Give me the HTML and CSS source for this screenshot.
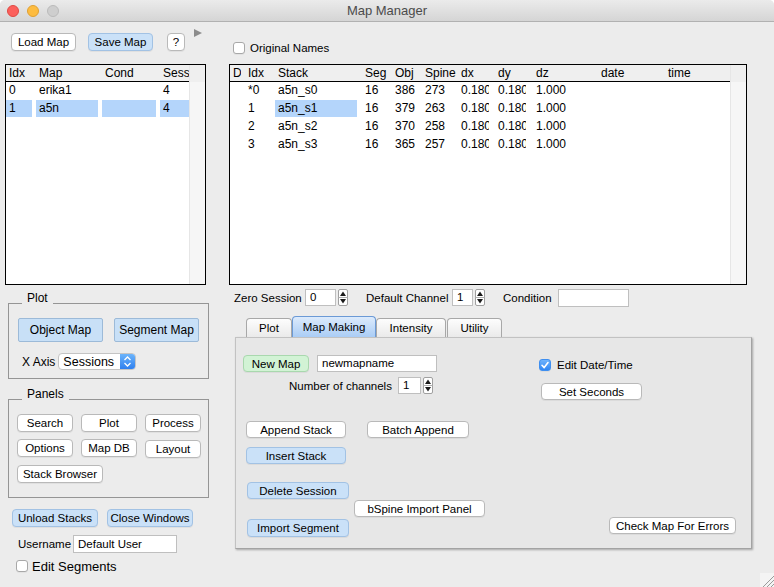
FILE: index.html
```html
<!DOCTYPE html>
<html>
<head>
<meta charset="utf-8">
<title>Map Manager</title>
<link rel="stylesheet" href="styles.css">
</head>
<body>
<div class="window">
  <header class="titlebar">
    <div class="lights"><span class="light red"></span><span class="light yellow"></span><span class="light gray"></span></div>
    <div class="title">Map Manager</div>
    <div></div>
  </header>
  <main class="body">
    <section class="left">
      <div class="toolbar">
        <div class="btn load-btn">Load Map</div>
        <div class="btn blue save-btn">Save Map</div>
        <div class="btn help-btn">?</div>
        <div class="tri"></div>
      </div>

      <div class="list list-maps">
        <div class="list-main">
          <div class="mrow head"><div class="c">Idx</div><div class="c">Map</div><div class="c">Cond</div><div class="c">Sess</div></div>
          <div class="mrow"><div class="c">0</div><div class="c">erika1</div><div class="c"></div><div class="c">4</div></div>
          <div class="mrow sel"><div class="c">1</div><div class="c">a5n</div><div class="c"></div><div class="c">4</div></div>
        </div>
        <div class="list-scroll"></div>
      </div>

      <div class="group plot-group">
        <div class="group-title">Plot</div>
        <div class="plot-btns">
          <div class="bigbtn">Object Map</div>
          <div class="bigbtn seg">Segment Map</div>
        </div>
        <div class="xaxis">
          <span class="xaxis-label">X Axis</span>
          <div class="popup">
            <span class="popup-text">Sessions</span>
            <span class="popup-arrow"><svg width="15" height="15" viewBox="0 0 15 15"><path d="M4.5 6 L7.5 3 L10.5 6" fill="none" stroke="#fff" stroke-width="1.3"/><path d="M4.5 9 L7.5 12 L10.5 9" fill="none" stroke="#fff" stroke-width="1.3"/></svg></span>
          </div>
        </div>
      </div>

      <div class="group panels-group">
        <div class="group-title">Panels</div>
        <div class="panel-grid">
          <div class="btn">Search</div>
          <div class="btn">Plot</div>
          <div class="btn">Process</div>
          <div class="btn">Options</div>
          <div class="btn">Map DB</div>
          <div class="btn layout-btn">Layout</div>
          <div class="btn stack-browser">Stack Browser</div>
        </div>
      </div>

      <div class="bottom-btns">
        <div class="btn blue unload">Unload Stacks</div>
        <div class="btn blue close-win">Close Windows</div>
      </div>

      <div class="user-row">
        <span class="user-label">Username</span>
        <div class="field user-field">Default User</div>
      </div>

      <div class="edit-row">
        <span class="check"></span>
        <span class="edit-label">Edit Segments</span>
      </div>
    </section>

    <section class="right">
      <div class="orig-row">
        <span class="check"></span>
        <span class="orig-label">Original Names</span>
      </div>

      <div class="list list-stacks">
        <div class="list-main">
          <div class="srow head"><div class="c">D</div><div class="c">Idx</div><div class="c">Stack</div><div class="c">Seg</div><div class="c">Obj</div><div class="c">Spines</div><div class="c">dx</div><div class="c">dy</div><div class="c">dz</div><div class="c">date</div><div class="c">time</div></div>
          <div class="srow"><div class="c"></div><div class="c">*0</div><div class="c">a5n_s0</div><div class="c">16</div><div class="c">386</div><div class="c">273</div><div class="c">0.1800</div><div class="c">0.1800</div><div class="c">1.000</div><div class="c"></div><div class="c"></div></div>
          <div class="srow"><div class="c"></div><div class="c">1</div><div class="c sel-cell">a5n_s1</div><div class="c">16</div><div class="c">379</div><div class="c">263</div><div class="c">0.1800</div><div class="c">0.1800</div><div class="c">1.000</div><div class="c"></div><div class="c"></div></div>
          <div class="srow"><div class="c"></div><div class="c">2</div><div class="c">a5n_s2</div><div class="c">16</div><div class="c">370</div><div class="c">258</div><div class="c">0.1800</div><div class="c">0.1800</div><div class="c">1.000</div><div class="c"></div><div class="c"></div></div>
          <div class="srow"><div class="c"></div><div class="c">3</div><div class="c">a5n_s3</div><div class="c">16</div><div class="c">365</div><div class="c">257</div><div class="c">0.1800</div><div class="c">0.1800</div><div class="c">1.000</div><div class="c"></div><div class="c"></div></div>
        </div>
        <div class="list-scroll"></div>
      </div>

      <div class="ctrl-row">
        <span class="lbl zero-lbl">Zero Session</span>
        <div class="field zero-field">0</div>
        <svg class="stepper" width="10" height="17" viewBox="0 0 10 17"><rect x="0.5" y="0.5" width="9" height="16" rx="1.5" fill="#fff" stroke="#a0a0a0"/><line x1="0.5" y1="8.5" x2="9.5" y2="8.5" stroke="#b0b0b0"/><path d="M2 7 L5 2.5 L8 7Z" fill="#1a1a1a"/><path d="M2 10 L5 14.5 L8 10Z" fill="#1a1a1a"/></svg>
        <span class="lbl chan-lbl">Default Channel</span>
        <div class="field chan-field">1</div>
        <svg class="stepper" width="10" height="17" viewBox="0 0 10 17"><rect x="0.5" y="0.5" width="9" height="16" rx="1.5" fill="#fff" stroke="#a0a0a0"/><line x1="0.5" y1="8.5" x2="9.5" y2="8.5" stroke="#b0b0b0"/><path d="M2 7 L5 2.5 L8 7Z" fill="#1a1a1a"/><path d="M2 10 L5 14.5 L8 10Z" fill="#1a1a1a"/></svg>
        <span class="lbl cond-lbl">Condition</span>
        <div class="field cond-field"></div>
      </div>

      <div class="tabs">
        <div class="tab tab-plot">Plot</div>
        <div class="tab active tab-mm">Map Making</div>
        <div class="tab tab-int">Intensity</div>
        <div class="tab tab-util">Utility</div>
      </div>

      <div class="tabpanel">
        <div class="tp-left">
          <div class="tp-row">
            <div class="btn green newmap">New Map</div>
            <div class="field newmap-field">newmapname</div>
          </div>
          <div class="tp-row chan-row">
            <span class="nchan-lbl">Number of channels</span>
            <div class="field nchan-field">1</div>
            <svg class="stepper" width="10" height="17" viewBox="0 0 10 17"><rect x="0.5" y="0.5" width="9" height="16" rx="1.5" fill="#fff" stroke="#a0a0a0"/><line x1="0.5" y1="8.5" x2="9.5" y2="8.5" stroke="#b0b0b0"/><path d="M2 7 L5 2.5 L8 7Z" fill="#1a1a1a"/><path d="M2 10 L5 14.5 L8 10Z" fill="#1a1a1a"/></svg>
          </div>
          <div class="tp-row append-row">
            <div class="btn append">Append Stack</div>
            <div class="btn batch">Batch Append</div>
          </div>
          <div class="tp-row insert-row">
            <div class="btn blue insert">Insert Stack</div>
          </div>
          <div class="tp-row delete-row">
            <div class="btn blue delete">Delete Session</div>
          </div>
          <div class="tp-row bspine-row">
            <div class="btn bspine">bSpine Import Panel</div>
          </div>
          <div class="tp-row import-row">
            <div class="btn blue importseg">Import Segment</div>
          </div>
        </div>
        <div class="tp-right">
          <div class="date-row">
            <span class="check checked"><svg width="12" height="12" viewBox="0 0 12 12"><path d="M3 6.3 L5.2 8.6 L9 3.6" fill="none" stroke="#fff" stroke-width="1.6" stroke-linecap="round" stroke-linejoin="round"/></svg></span>
            <span class="date-label">Edit Date/Time</span>
          </div>
          <div class="btn setsec">Set Seconds</div>
          <div class="btn checkmap">Check Map For Errors</div>
        </div>
      </div>
    </section>
  </main>
  <div class="grip"><svg width="14" height="14" viewBox="0 0 14 14"><path d="M14 3 L3 14 M14 7 L7 14 M14 11 L11 14" stroke="#9a9a9a" stroke-width="1"/></svg></div>
</div>
</body>
</html>
```

FILE: styles.css
```css
* { box-sizing: border-box; }
html, body { margin: 0; padding: 0; }
body {
  background: #ffffff;
  font-family: "Liberation Sans", Arial, sans-serif;
  font-size: 11.5px;
  color: #000;
}
.window {
  position: relative;
  width: 774px;
  height: 587px;
  background: #ececec;
  border-radius: 5px 5px 0 0;
  overflow: hidden;
}

/* title bar */
.titlebar {
  height: 22px;
  display: grid;
  grid-template-columns: 1fr auto 1fr;
  align-items: center;
  background: linear-gradient(#ebebeb, #d5d5d5);
  border-bottom: 1px solid #b1b1b1;
}
.lights { display: flex; gap: 8px; padding-left: 7px; }
.light { width: 12px; height: 12px; border-radius: 50%; }
.red { background: #fc605c; border: 1px solid #de4a44; }
.yellow { background: #fdbc40; border: 1px solid #dfa033; }
.gray { background: #cecece; border: 1px solid #bababa; }
.title { font-size: 13px; color: #4b4b4b; }

.body { display: flex; }
.left { width: 229px; flex: none; }
.right { flex: 1; }

/* buttons */
.btn {
  height: 18px;
  display: flex;
  align-items: center;
  justify-content: center;
  background: #ffffff;
  border: 1px solid #b9b9b9;
  border-radius: 4px;
  box-shadow: 0 1px 0 rgba(0,0,0,0.05);
  white-space: nowrap;
  color: #000;
}
.btn.blue { background: #cae1f8; border-color: #a2c2e4; }
.btn.green { background: #d2f3d5; border-color: #a9d8ae; }

.toolbar { display: flex; align-items: flex-start; margin: 11px 0 0 11px; height: 18px; }
.load-btn { width: 65px; }
.save-btn { width: 65px; margin-left: 12px; }
.help-btn { width: 18px; margin-left: 14px; }
.tri {
  width: 0; height: 0;
  border-left: 8px solid #8c8c8c;
  border-top: 4px solid transparent;
  border-bottom: 4px solid transparent;
  margin: -4px 0 0 9px;
}

/* lists */
.list { display: flex; border: 1px solid #000; background: #fff; height: 221px; font-size: 12px; }
.list-main { flex: 1; }
.list-scroll {
  width: 16px;
  flex: none;
  background: linear-gradient(#efefef 0 17px, #f6f6f6 17px);
  border-left: 1px solid #e6e6e6;
}
.list-maps { margin: 13px 0 0 5px; width: 201px; }
.list-stacks { margin-top: 10px; width: 518px; }

.mrow, .srow { display: grid; height: 18px; }
.mrow { grid-template-columns: 26px 62px 54px 29px; column-gap: 4px; }
.mrow > .c:last-child { overflow: visible; }
.srow { grid-template-columns: 15px 30px 87px 30px 30px 36px 37px 38px 65px 67px 65px; }
.srow > .c { margin-right: 4px; }
.srow > .c:nth-child(3) { margin-right: 5px; }
.srow > .c:nth-child(6) { margin-right: 2px; }
.srow > .c:nth-child(7) { margin-right: 6px; }
.srow > .c:nth-child(8) { margin-right: 7px; }
.c {
  height: 17px;
  line-height: 17px;
  padding-left: 3px;
  overflow: hidden;
  white-space: nowrap;
}
.head { height: 17px; background: #efefef; border-bottom: 1px solid #000; }
.head .c { height: 16px; line-height: 17px; }
.mrow.sel .c, .sel-cell { background: #b4d5fb; }

/* groups */
.group { border: 1px solid #959595; width: 201px; margin-left: 8px; }
.group-title {
  width: max-content;
  background: #ececec;
  padding: 0 5px;
  line-height: 14px;
  font-size: 12px;
  margin-top: -13px;
  margin-bottom: 13px;
}
.plot-group { margin-top: 18px; padding: 0 0 8px 9px; }
.plot-group .group-title { margin-left: 4px; }
.plot-btns { display: flex; }
.bigbtn {
  width: 85px;
  height: 24px;
  display: flex;
  align-items: center;
  justify-content: center;
  background: #c8e0f7;
  border: 1px solid #9cbad8;
  border-radius: 2px;
  white-space: nowrap;
  font-size: 12px;
}
.bigbtn.seg { margin-left: 11px; }
.xaxis { display: flex; align-items: center; margin-top: 11px; height: 17px; }
.xaxis-label { margin-left: 4px; font-size: 12px; }
.popup {
  display: flex;
  align-items: center;
  justify-content: space-between;
  width: 78px;
  height: 17px;
  margin-left: 3px;
  background: #fff;
  border: 1px solid #c4c4c4;
  border-radius: 4px;
  font-size: 12.5px;
}
.popup-text { padding-left: 4px; }
.popup-arrow {
  width: 15px;
  height: 15px;
  display: flex;
  background: linear-gradient(#6cb4fb, #2f80ef);
  border-radius: 0 3px 3px 0;
}

.panels-group { margin-top: 20px; padding: 0 0 14px 8px; }
.panels-group .group-title { margin-left: 5px; }
.panel-grid {
  display: grid;
  grid-template-columns: 56px 56px 56px;
  column-gap: 8px;
  row-gap: 7px;
}
.layout-btn { margin-top: 1px; }
.stack-browser { grid-column: 1 / span 2; width: 86px; }

.bottom-btns { display: flex; margin: 11px 0 0 12px; }
.unload { width: 86px; }
.close-win { width: 86px; margin-left: 9px; }

.field {
  height: 17px;
  background: #fff;
  border: 1px solid #bfbfbf;
  padding-left: 4px;
  line-height: 15px;
  white-space: nowrap;
  overflow: hidden;
}
.user-row { display: flex; align-items: center; margin: 8px 0 0 18px; }
.user-label { width: 55px; }
.user-field { width: 104px; height: 18px; line-height: 16px; }

.check {
  width: 12px;
  height: 12px;
  flex: none;
  background: #fff;
  border: 1px solid #a8a8a8;
  border-radius: 3px;
  box-shadow: 0 1px 0 rgba(0,0,0,0.04);
}
.check.checked {
  border-color: #3f8ff0;
  background: linear-gradient(#6fb3fc, #2f86f3);
  display: flex;
}
.check.checked svg { margin: -1px; }

.edit-row { display: flex; align-items: center; margin: 6px 0 0 16px; height: 14px; }
.edit-label { margin-left: 4px; font-size: 13px; }

/* right */
.orig-row { display: flex; align-items: center; height: 12px; margin: 20px 0 0 4px; }
.orig-label { margin-left: 5px; }

.ctrl-row { display: flex; align-items: center; height: 19px; margin: 3px 0 0 5px; }
.lbl { white-space: nowrap; }
.zero-lbl { width: 71px; }
.zero-field { width: 31px; }
.stepper { margin-left: 2px; flex: none; }
.chan-lbl { width: 86px; margin-left: 18px; }
.chan-field { width: 21px; }
.cond-lbl { width: 55px; margin-left: 18px; }
.cond-field { width: 71px; height: 18px; }

.tabs { display: flex; align-items: flex-end; height: 21px; margin: 9px 0 0 17px; }
.tab {
  height: 19px;
  display: flex;
  align-items: center;
  justify-content: center;
  border: 1px solid #a8a8a8;
  border-bottom: none;
  border-radius: 4px 4px 0 0;
  background: linear-gradient(#fdfdfd, #eaeaea);
  white-space: nowrap;
}
.tab.active {
  height: 21px;
  background: linear-gradient(#dcebfc, #aacdf5);
  border-color: #6b9ad6;
}
.tab-plot { width: 46px; }
.tab-mm { width: 84px; }
.tab-int { width: 70px; }
.tab-util { width: 55px; margin-left: 1px; }

.tabpanel {
  display: flex;
  width: 517px;
  height: 212px;
  margin-left: 6px;
  padding: 17px 0 0 7px;
  background: #e7e7e7;
  border: 1px solid #c2c2c2;
  border-right-color: #a3a3a3;
  border-bottom-color: #a3a3a3;
  box-shadow: 1px 1px 2px rgba(0,0,0,0.3);
}
.tp-left { width: 296px; flex: none; }
.tp-row { display: flex; align-items: center; }
.newmap { width: 66px; height: 17px; }
.newmap-field { width: 120px; margin-left: 8px; }
.chan-row { margin-top: 5px; }
.nchan-lbl { width: 109px; margin-left: 46px; white-space: nowrap; }
.nchan-field { width: 23px; }
.append-row { margin-top: 27px; }
.append { width: 100px; height: 17px; margin-left: 3px; }
.batch { width: 102px; height: 17px; margin-left: 21px; }
.insert-row { margin-top: 9px; }
.insert { width: 100px; height: 17px; margin-left: 3px; }
.delete-row { margin-top: 18px; }
.delete { width: 102px; height: 17px; margin-left: 4px; }
.bspine-row { margin-top: 1px; }
.bspine { width: 131px; height: 17px; margin-left: 111px; }
.import-row { margin-top: 2px; }
.importseg { width: 102px; height: 18px; margin-left: 4px; }

.tp-right { display: flex; flex-direction: column; align-items: flex-start; }
.date-row { display: flex; align-items: center; margin-top: 4px; height: 12px; }
.date-label { margin-left: 6px; }
.setsec { width: 101px; height: 17px; margin: 12px 0 0 2px; }
.checkmap { width: 127px; height: 17px; margin: 117px 0 0 70px; }

.grip { position: absolute; right: 0; bottom: 0; width: 14px; height: 14px; background: #f4f4f4; }
.grip svg { display: block; }
```
